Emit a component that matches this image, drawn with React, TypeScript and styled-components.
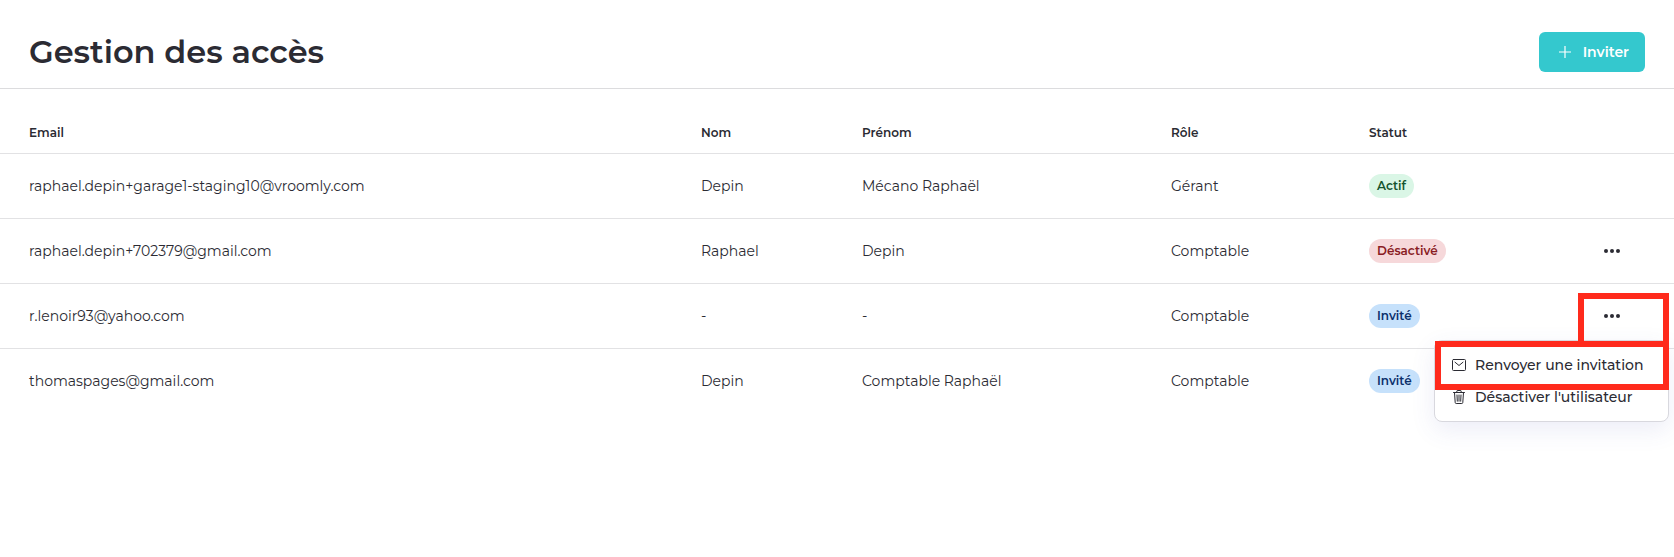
import React from "react";
import styled, { createGlobalStyle } from "styled-components";

type Status = "active" | "disabled" | "invited";

interface User {
  email: string;
  lastName: string;
  firstName: string;
  role: string;
  status: Status;
  hasActions: boolean;
  menuOpen?: boolean;
}

const users: User[] = [
  { email: "raphael.depin+garage1-staging10@vroomly.com", lastName: "Depin", firstName: "Mécano Raphaël", role: "Gérant", status: "active", hasActions: false },
  { email: "raphael.depin+702379@gmail.com", lastName: "Raphael", firstName: "Depin", role: "Comptable", status: "disabled", hasActions: true },
  { email: "r.lenoir93@yahoo.com", lastName: "-", firstName: "-", role: "Comptable", status: "invited", hasActions: true, menuOpen: true },
  { email: "thomaspages@gmail.com", lastName: "Depin", firstName: "Comptable Raphaël", role: "Comptable", status: "invited", hasActions: false },
];

const statuses: Record<Status, { label: string; background: string; color: string }> = {
  active: { label: "Actif", background: "#daf6e6", color: "#14532d" },
  disabled: { label: "Désactivé", background: "#f6d8da", color: "#8a1c24" },
  invited: { label: "Invité", background: "#c6e1fb", color: "#0b2f6b" },
};

const GlobalStyle = createGlobalStyle`
  *, *::before, *::after { box-sizing: border-box; }
  body {
    margin: 0;
    background: #fff;
    color: #2b2b33;
    font-family: Montserrat, Inter, sans-serif;
    font-size: 14px;
    line-height: 24px;
  }
  button { font: inherit; color: inherit; cursor: pointer; }
`;

const Page = styled.div`
  min-height: 100vh;
`;

const Header = styled.header`
  display: flex;
  align-items: center;
  justify-content: space-between;
  padding: 32px 29px 16px;
  border-bottom: 1px solid #dcdcde;
`;

const Title = styled.h1`
  margin: 0;
  font-size: 32px;
  line-height: 40px;
  font-weight: 600;
`;

const InviteButton = styled.button`
  display: flex;
  align-items: center;
  gap: 12px;
  height: 40px;
  padding: 0 16px 0 20px;
  border: 0;
  border-radius: 6px;
  background: #34c8ce;
  color: #fff;
  font-weight: 600;
`;

const Table = styled.table`
  width: 100%;
  table-layout: fixed;
  border-collapse: separate;
  border-spacing: 0;
`;

const Column = styled.col<{ $width?: number }>`
  width: ${({ $width }) => ($width ? `${$width}px` : "auto")};
`;

const HeadCell = styled.th`
  padding: 32px 16px 8px;
  height: 65px;
  border-bottom: 1px solid #e2e2e4;
  font-size: 12px;
  font-weight: 600;
  text-align: left;
  &:first-child { padding-left: 29px; }
`;

const Cell = styled.td`
  height: 65px;
  padding: 0 16px;
  border-bottom: 1px solid #e2e2e4;
  &:first-child { padding-left: 29px; }
  tr:last-child > & { border-bottom-color: transparent; }
`;

const ActionsCell = styled(Cell)`
  position: relative;
  text-align: center;
`;

const Badge = styled.span<{ $status: Status }>`
  display: block;
  width: fit-content;
  padding: 0 8px;
  border-radius: 12px;
  font-size: 12px;
  font-weight: 600;
  background: ${({ $status }) => statuses[$status].background};
  color: ${({ $status }) => statuses[$status].color};
`;

const IconButton = styled.button`
  display: inline-flex;
  padding: 8px;
  border: 0;
  background: none;
  vertical-align: middle;
`;

const Menu = styled.div`
  position: absolute;
  top: 56px;
  right: 5px;
  z-index: 1;
  width: 235px;
  padding: 8px 0;
  border: 1px solid #d8d8de;
  border-radius: 8px;
  background: #fff;
  box-shadow: 0 8px 24px rgba(70, 80, 180, 0.1);
`;

const MenuItem = styled.button`
  display: flex;
  align-items: center;
  gap: 8px;
  width: 100%;
  height: 32px;
  padding: 0 16px;
  border: 0;
  background: none;
  font-weight: 500;
  white-space: nowrap;
`;

const Highlight = styled.div`
  position: absolute;
  z-index: 2;
  border: 6px solid #ff2a1c;
  pointer-events: none;
`;

const TriggerHighlight = styled(Highlight)`
  top: 9px;
  right: 5px;
  width: 91px;
  height: 54px;
`;

const ItemHighlight = styled(Highlight)`
  top: 0;
  left: 0;
  right: -1px;
  height: 49px;
`;

const PlusIcon = () => (
  <svg width="12" height="12" viewBox="0 0 12 12" fill="none" stroke="currentColor" strokeWidth="1.2" aria-hidden="true">
    <path d="M6 0v12M0 6h12" />
  </svg>
);

const DotsIcon = () => (
  <svg width="18" height="16" viewBox="0 0 18 16" fill="currentColor" aria-hidden="true">
    <circle cx="3" cy="8" r="2" />
    <circle cx="9" cy="8" r="2" />
    <circle cx="15" cy="8" r="2" />
  </svg>
);

const MailIcon = () => (
  <svg width="16" height="16" viewBox="0 0 16 16" fill="none" stroke="currentColor" strokeLinejoin="round" strokeLinecap="round" aria-hidden="true">
    <rect x="1.5" y="2.5" width="13" height="11" rx="1" />
    <path d="M4 5.2 8 8.5l4-3.3" />
  </svg>
);

const TrashIcon = () => (
  <svg width="16" height="16" viewBox="0 0 16 16" fill="none" stroke="currentColor" strokeLinejoin="round" strokeLinecap="round" aria-hidden="true">
    <path d="M2.5 3.5h11M5.5 3.5l.7-2h3.6l.7 2M3.5 3.5l.7 10q.1 1 1 1h5.6q.9 0 1-1l.7-10M6 6l.3 6.2M8 6v6.2M10 6l-.3 6.2" />
  </svg>
);

export default function App() {
  return (
    <Page>
      <GlobalStyle />
      <Header>
        <Title>Gestion des accès</Title>
        <InviteButton type="button">
          <PlusIcon />
          Inviter
        </InviteButton>
      </Header>
      <main>
        <Table>
          <colgroup>
            <Column />
            <Column $width={161} />
            <Column $width={309} />
            <Column $width={198} />
            <Column $width={197} />
            <Column $width={124} />
          </colgroup>
          <thead>
            <tr>
              <HeadCell scope="col">Email</HeadCell>
              <HeadCell scope="col">Nom</HeadCell>
              <HeadCell scope="col">Prénom</HeadCell>
              <HeadCell scope="col">Rôle</HeadCell>
              <HeadCell scope="col">Statut</HeadCell>
              <HeadCell scope="col" aria-label="Actions" />
            </tr>
          </thead>
          <tbody>
            {users.map((user) => (
              <tr key={user.email}>
                <Cell>{user.email}</Cell>
                <Cell>{user.lastName}</Cell>
                <Cell>{user.firstName}</Cell>
                <Cell>{user.role}</Cell>
                <Cell>
                  <Badge $status={user.status}>{statuses[user.status].label}</Badge>
                </Cell>
                <ActionsCell>
                  {user.hasActions && (
                    <IconButton type="button" aria-label="Actions" aria-expanded={!!user.menuOpen}>
                      <DotsIcon />
                    </IconButton>
                  )}
                  {user.menuOpen && (
                    <>
                      <TriggerHighlight />
                      <Menu role="menu">
                        <MenuItem type="button" role="menuitem">
                          <MailIcon />
                          Renvoyer une invitation
                        </MenuItem>
                        <MenuItem type="button" role="menuitem">
                          <TrashIcon />
                          Désactiver l'utilisateur
                        </MenuItem>
                        <ItemHighlight />
                      </Menu>
                    </>
                  )}
                </ActionsCell>
              </tr>
            ))}
          </tbody>
        </Table>
      </main>
    </Page>
  );
}
